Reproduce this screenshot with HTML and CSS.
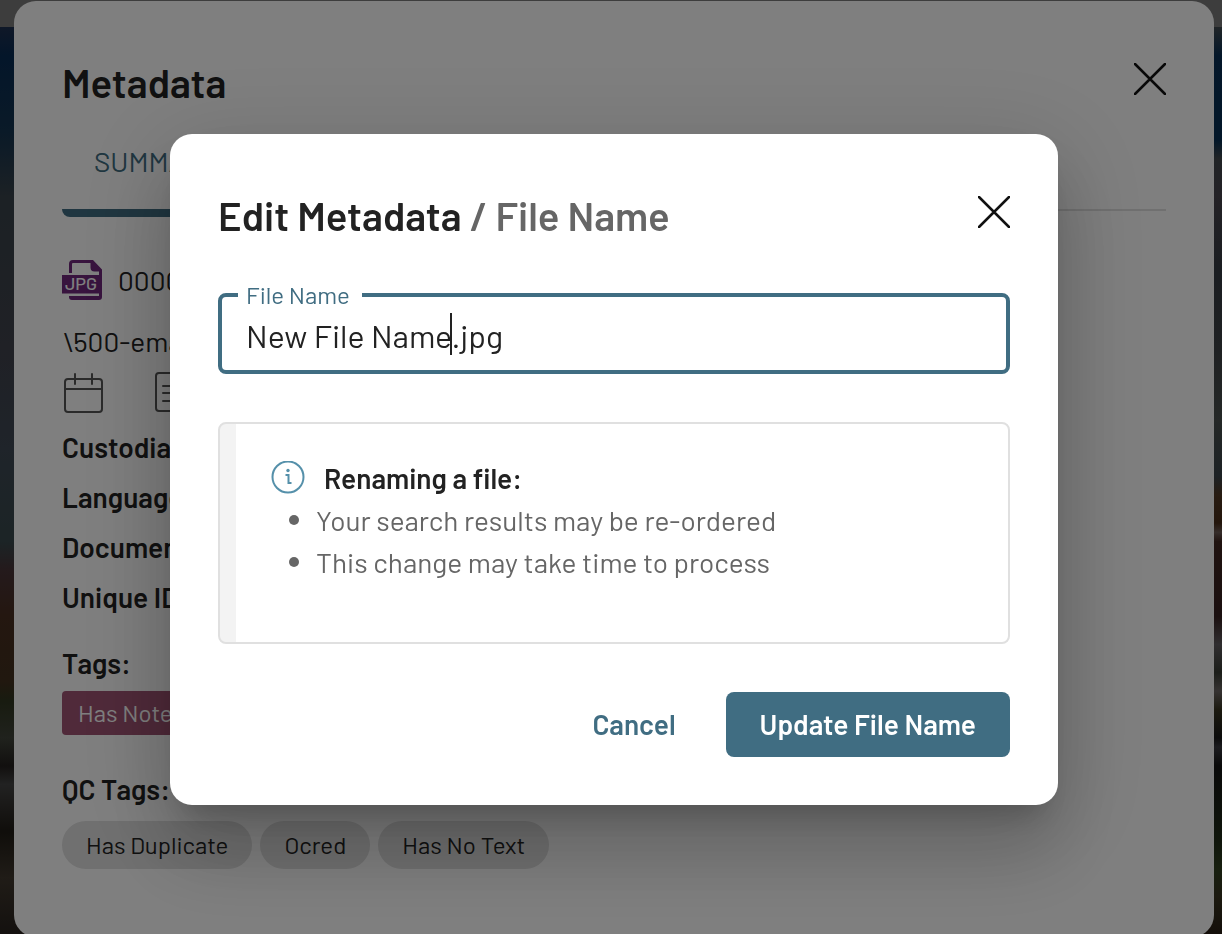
FILE: index.html
```html
<!DOCTYPE html>
<html lang="en">

<head>
    <meta charset="utf-8">
    <meta name="viewport" content="width=device-width, initial-scale=1">
    <title>Edit Metadata</title>
    <link rel="stylesheet" href="styles.css">
</head>

<body>
    <main class="panel">
        <header class="header">
            <h1 class="title">Metadata</h1>
            <button class="close" type="button" aria-label="Close metadata">
                <svg viewBox="0 0 32 32" width="32" height="32"><path d="M1 1L31 31M31 1L1 31" /></svg>
            </button>
        </header>

        <nav class="tabs">
            <button class="tab" type="button">SUMMARY</button>
        </nav>

        <div class="file">
            <svg viewBox="0 0 40 40" width="40" height="40" aria-hidden="true">
                <path class="file-line" d="M8.500 13V4Q8.500 1.500 11 1.500H29M38.500 10V35" />
                <path class="file-fill" d="M28.500 0H31L40 9.500V11.500H32.500Q28.500 11.500 28.500 7.500ZM0 15H40V33.500H0ZM7 36H37V33H40V37Q40 40 37 40H10Q7 40 7 37Z" />
                <text class="file-type" x="19" y="30" text-anchor="middle">JPG</text>
            </svg>
            <span>0000001</span>
        </div>
        <div class="path">\500-emails</div>
        <div class="icons">
            <svg viewBox="0 0 42 42" width="42" height="42" aria-hidden="true">
                <rect x="3" y="7" width="37" height="33" rx="3" />
                <path d="M3 17H40M13 2V12M30 2V12" />
            </svg>
            <svg viewBox="0 0 42 42" width="42" height="42" aria-hidden="true">
                <rect x="4" y="1" width="32" height="38" rx="3" />
                <path d="M11 14H29M11 21H29M11 29H29" />
            </svg>
        </div>

        <ul class="fields">
            <li>Custodian:</li>
            <li>Language:</li>
            <li>Document:</li>
            <li>Unique ID:</li>
        </ul>

        <h2 class="label">Tags:</h2>
        <div class="tags">
            <span class="tag">Has Notes</span>
        </div>

        <h2 class="label label-qc">QC Tags:</h2>
        <div class="pills">
            <span class="pill">Has Duplicate</span>
            <span class="pill">Ocred</span>
            <span class="pill">Has No Text</span>
        </div>
    </main>

    <div class="backdrop">
        <form class="modal" role="dialog" aria-labelledby="modal-title">
            <header class="header">
                <h2 class="title" id="modal-title">Edit Metadata <span class="title-sub">/ File Name</span></h2>
                <button class="close" type="button" aria-label="Close">
                    <svg viewBox="0 0 32 32" width="32" height="32"><path d="M1 1L31 31M31 1L1 31" /></svg>
                </button>
            </header>

            <fieldset class="field">
                <legend><label for="filename">File Name</label></legend>
                <input id="filename" type="text" value="New File Name.jpg" autocomplete="off">
                <span class="caret"></span>
            </fieldset>

            <section class="info">
                <h3 class="info-title">
                    <svg viewBox="0 0 34 34" width="34" height="34" aria-hidden="true">
                        <circle cx="17" cy="16" r="15.500" />
                        <path d="M14.500 14H17.500V22H20.500" />
                        <circle class="info-dot" cx="17" cy="9.500" r="1.700" />
                    </svg>
                    Renaming a file:
                </h3>
                <ul class="info-list">
                    <li>Your search results may be re-ordered</li>
                    <li>This change may take time to process</li>
                </ul>
            </section>

            <footer class="actions">
                <button class="btn" type="button">Cancel</button>
                <button class="btn btn-primary" type="submit">Update File Name</button>
            </footer>
        </form>
    </div>
</body>

</html>
```
FILE: styles.css
```css
* {
    box-sizing: border-box;
}

body {
    margin: 0;
    height: 100vh;
    overflow: hidden;
    font-family: Barlow, Roboto, "Liberation Sans", sans-serif;
    font-size: 28px;
    line-height: 40px;
    color: #222;
    /* toolbar strip, then the photo on the left and on the right */
    background:
        linear-gradient(#7a7a7a, #7a7a7a) top / 100% 27px no-repeat,
        linear-gradient(#1e3050 3%, #082c54 6%, #143450 14%, #38424a 21%, #40424c 37%, #3e4854 48%, #38484c 58%, #483438 61%, #482e20 66%, #42301e 73%, #303620 75%, #40443a 79%, #24201e 82%, #444444 84%, #201c16 89%, #40382e 94%, #28221e) left / 50% 100% no-repeat,
        linear-gradient(#404a50 3%, #082e54 6%, #062e52 15%, #42484c 17%, #48444c 21%, #363c44 29%, #3e4246 37%, #4a504e 45%, #3a444a 51%, #503824 53%, #482c18 56%, #6c5a54 57%, #402620 58%, #362020 66%, #605c60 69%, #383c34 72%, #6c6664 74%, #383420 76%, #181818 79%, #38383e 80%, #141414 82%, #202c18 90%, #304020 93%, #383420 96%, #281e14) right / 50% 100% no-repeat;
}

h1,
h2,
h3,
ul {
    margin: 0;
    padding: 0;
}

button {
    border: none;
    background: none;
    padding: 0;
    color: inherit;
    font: inherit;
    cursor: pointer;
}

.panel {
    height: calc(100vh + 2px);
    margin: 1px 8px 0 14px;
    padding: 56px 48px 0;
    border-radius: 22px;
    background: #fff;
}

/* header, same in the panel and in the modal */
.header {
    display: flex;
    justify-content: space-between;
    align-items: flex-start;
    height: 56px;
}

.title {
    font-size: 40px;
    font-weight: 600;
    line-height: 50px;
}

.title-sub {
    color: #666;
}

.close {
    padding-top: 6px;
    line-height: 0;
}

.close svg {
    fill: none;
    stroke: #111;
    stroke-width: 2.5;
    stroke-linecap: round;
}

.tabs {
    display: flex;
    border-bottom: 2px solid #e0e0e0;
}

.tab {
    position: relative;
    padding: 28px 32px;
    color: #406d82;
}

.tab::after {
    content: "";
    position: absolute;
    left: 0;
    right: 0;
    top: 100%;
    height: 8px;
    border-radius: 0 0 8px 8px;
    background: #406d82;
}

.file {
    display: flex;
    align-items: center;
    gap: 16px;
    height: 42px;
    margin-top: 48px;
}

.file-line {
    fill: none;
    stroke: #70287c;
    stroke-width: 3;
}

.file-fill {
    fill: #70287c;
}

.file-type {
    fill: #fff;
    font-size: 18px;
    font-weight: 500;
}

.path {
    margin-top: 20px;
}

.icons {
    display: flex;
    gap: 48px;
    margin: 11px 0 8px;
    line-height: 0;
}

.icons svg {
    fill: none;
    stroke: #555;
    stroke-width: 2;
    stroke-linecap: round;
}

.fields {
    list-style: none;
    font-weight: 600;
    line-height: 50px;
}

.label {
    margin-top: 21px;
    font-size: 28px;
    font-weight: 600;
}

.label-qc {
    margin-top: 34px;
}

.tags {
    display: flex;
    margin-top: 8px;
}

.tag {
    padding: 2px 16px;
    border-radius: 4px;
    background: #a05474;
    color: #fff;
    font-size: 24px;
}

.pills {
    display: flex;
    gap: 8px;
    margin-top: 12px;
}

.pill {
    padding: 4px 24px;
    border-radius: 24px;
    background: #e0e0e0;
    font-size: 24px;
}

.backdrop {
    position: fixed;
    inset: 0;
    display: flex;
    align-items: center;
    justify-content: center;
    padding: 5px 8px 0 14px;
    background: rgba(0, 0, 0, 0.5);
}

.modal {
    width: 100%;
    max-width: 888px;
    padding: 56px 48px 48px;
    border-radius: 22px;
    background: #fff;
    box-shadow: 0 22px 30px -14px rgba(0, 0, 0, 0.2),
        0 48px 76px 6px rgba(0, 0, 0, 0.14),
        0 18px 92px 16px rgba(0, 0, 0, 0.12);
}

.field {
    position: relative;
    margin: 35px 0 0;
    padding: 0 20px 9px 16px;
    border: 4px solid #406d82;
    border-radius: 8px;
}

.field legend {
    padding: 0 12px 0 8px;
    color: #406d82;
    font-size: 24px;
    line-height: 28px;
}

.field input {
    display: block;
    width: 100%;
    height: 52px;
    padding: 0 8px;
    border: none;
    outline: none;
    background: none;
    color: #222;
    font: inherit;
    font-size: 32px;
}

.caret {
    position: absolute;
    left: 228px;
    top: 4px;
    width: 2px;
    height: 42px;
    background: #222;
}

.info {
    min-height: 222px;
    margin-top: 48px;
    padding: 34px;
    border: 2px solid #e0e0e0;
    border-radius: 8px;
    background: linear-gradient(#f3f3f3, #f3f3f3) left / 16px 100% no-repeat;
}

.info-title {
    display: flex;
    align-items: center;
    gap: 19px;
    padding-left: 17px;
    font-size: 28px;
    font-weight: 600;
}

.info-title svg {
    fill: none;
    stroke: #5590aa;
    stroke-width: 2;
}

.info-title .info-dot {
    fill: #5590aa;
    stroke: none;
}

.info-list {
    margin-top: 1px;
    padding-left: 35px;
    list-style: none;
    color: #666;
    line-height: 42px;
}

.info-list li {
    display: flex;
    align-items: center;
    gap: 17px;
}

.info-list li::before {
    content: "";
    width: 10px;
    height: 10px;
    border-radius: 50%;
    background: #666;
}

.actions {
    display: flex;
    justify-content: flex-end;
    gap: 16px;
    margin-top: 48px;
}

.btn {
    padding: 12px 34px 13px;
    border-radius: 8px;
    color: #406d82;
    font-weight: 600;
}

.btn-primary {
    background: #406d82;
    color: #fff;
}
```
